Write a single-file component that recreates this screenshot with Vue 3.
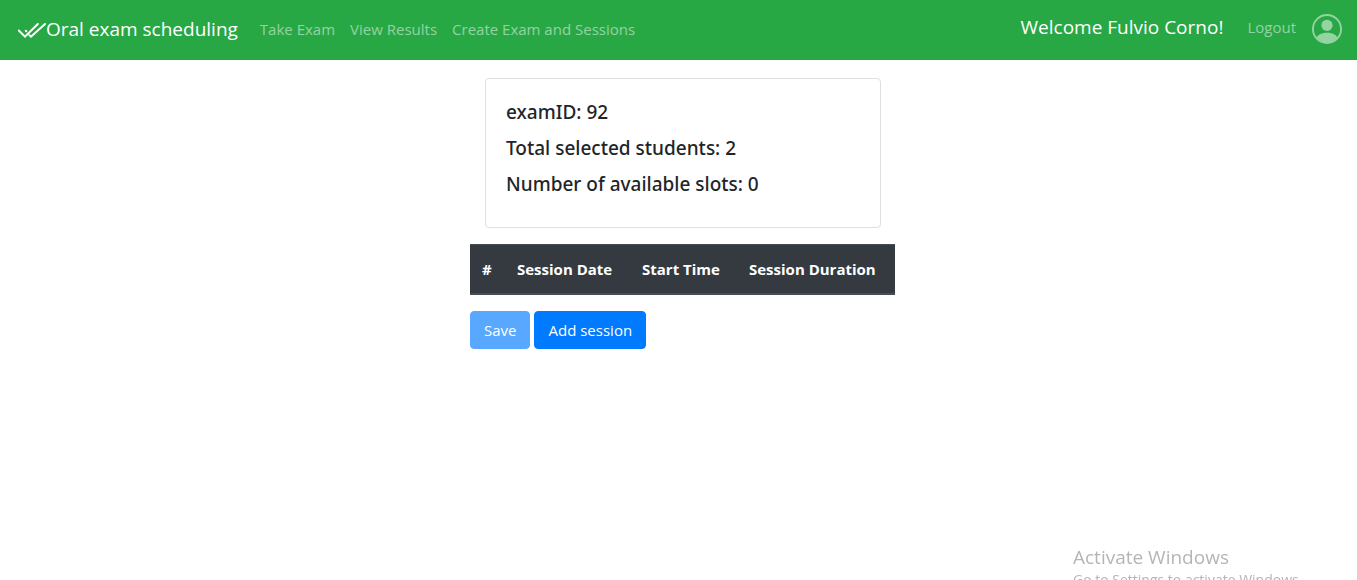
<script setup>
import { ref } from 'vue'

const links = ['Take Exam', 'View Results', 'Create Exam and Sessions']
const columns = ['#', 'Session Date', 'Start Time', 'Session Duration']
const facts = ref([
  { label: 'examID', value: 92 },
  { label: 'Total selected students', value: 2 },
  { label: 'Number of available slots', value: 0 },
])
</script>

<template>
  <header class="navbar">
    <a class="brand" href="#">
      <svg class="brand-icon" width="28" height="28" viewBox="0 0 28 28" aria-hidden="true">
        <path d="M.8 14.500 7 20.700 19.800 8M7.800 14.800 8.300 15.300M11.500 19.200 13 20.700 27 8" />
      </svg>
      <span>Oral exam scheduling</span>
    </a>
    <nav class="links">
      <a v-for="link in links" :key="link" class="nav-link" href="#">{{ link }}</a>
    </nav>
    <div class="user">
      <span class="welcome">Welcome Fulvio Corno!</span>
      <a class="nav-link" href="#">Logout</a>
      <a class="avatar" href="#" aria-label="Profile">
        <svg width="30" height="30" viewBox="0 0 16 16" aria-hidden="true">
          <path d="M13.468 12.37C12.758 11.226 11.195 10 8 10s-4.757 1.225-5.468 2.370A6.987 6.987 0 0 0 8 15a6.987 6.987 0 0 0 5.468-2.630z" />
          <path fill-rule="evenodd" d="M8 9a3 3 0 1 0 0-6 3 3 0 0 0 0 6z" />
          <path fill-rule="evenodd" d="M8 1a7 7 0 1 0 0 14A7 7 0 0 0 8 1zM0 8a8 8 0 1 1 16 0A8 8 0 0 1 0 8z" />
        </svg>
      </a>
    </div>
  </header>

  <main class="content">
    <section class="card">
      <h2 v-for="fact in facts" :key="fact.label" class="fact">{{ fact.label }}: {{ fact.value }}</h2>
    </section>

    <table class="sessions">
      <colgroup>
        <col class="col-index" />
        <col class="col-date" />
        <col class="col-time" />
        <col />
      </colgroup>
      <thead>
        <tr>
          <th v-for="column in columns" :key="column" scope="col">{{ column }}</th>
        </tr>
      </thead>
    </table>

    <div class="actions">
      <button class="btn" type="button" disabled>Save</button>
      <button class="btn" type="button">Add session</button>
    </div>
  </main>

  <aside class="watermark">
    <div class="watermark-title">Activate Windows</div>
    <div class="watermark-text">Go to Settings to activate Windows.</div>
  </aside>
</template>

<style>
body {
  background: #fff;
  color: #212529;
  font-family: "Segoe UI", "Open Sans", "Noto Sans", sans-serif;
  font-size: 15px;
  line-height: 24px;
}
</style>

<style scoped>
.navbar {
  display: flex;
  align-items: center;
  height: 60px;
  padding: 0 15px 2px 18px;
  box-sizing: border-box;
  background: #28a745;
  white-space: nowrap;
}

a {
  text-decoration: none;
}

.brand {
  display: flex;
  align-items: center;
  margin-right: 22px;
  color: #fff;
  font-size: 19px;
}

.brand-icon {
  margin-top: 2px;
  fill: none;
  stroke: #fff;
  stroke-width: 2;
  stroke-linecap: round;
}

.links {
  display: flex;
  gap: 15px;
}

.nav-link {
  color: rgba(255, 255, 255, 0.5);
}

.user {
  display: flex;
  align-items: center;
  margin-left: auto;
  padding-bottom: 4px;
}

.welcome {
  margin-right: 24px;
  color: #fff;
  font-size: 19px;
}

.avatar {
  display: flex;
  margin: 4px 0 0 16px;
}

.avatar svg {
  fill: rgba(255, 255, 255, 0.5);
}

.content {
  width: 425px;
  max-width: 100%;
  margin: 18px auto 0;
  padding-left: 8px;
}

.card {
  box-sizing: border-box;
  margin: 0 14px 16px 15px;
  padding: 21px 20px 31px;
  border: 1px solid #dfdfdf;
  border-radius: 4px;
}

.fact {
  margin: 0 0 12px;
  font-family: "Segoe UI", "Noto Sans", "Open Sans", sans-serif;
  font-size: 19px;
  font-weight: 500;
  line-height: 24px;
}

.fact:last-child {
  margin-bottom: 0;
}

.sessions {
  width: 100%;
  margin-bottom: 16px;
  border-collapse: collapse;
  table-layout: fixed;
  background: #343a40;
  color: #fff;
}

.col-index {
  width: 35px;
}

.col-date {
  width: 125px;
}

.col-time {
  width: 107px;
}

.sessions th {
  padding: 12px;
  border: solid #454d55;
  border-width: 1px 0 2px;
  font-weight: 700;
  text-align: left;
  white-space: nowrap;
}

.actions {
  display: flex;
  gap: 4px;
}

.btn {
  padding: 6px 13px;
  border: 1px solid #007bff;
  border-radius: 4px;
  background: #007bff;
  color: #fff;
  font: inherit;
}

.btn:disabled {
  opacity: 0.65;
}

.watermark {
  position: fixed;
  right: 50px;
  bottom: -11px;
  width: 234px;
  color: #b5b5b5;
  white-space: nowrap;
}

.watermark-title {
  font-size: 19px;
}

.watermark-text {
  font-size: 14px;
  line-height: 22px;
}
</style>
